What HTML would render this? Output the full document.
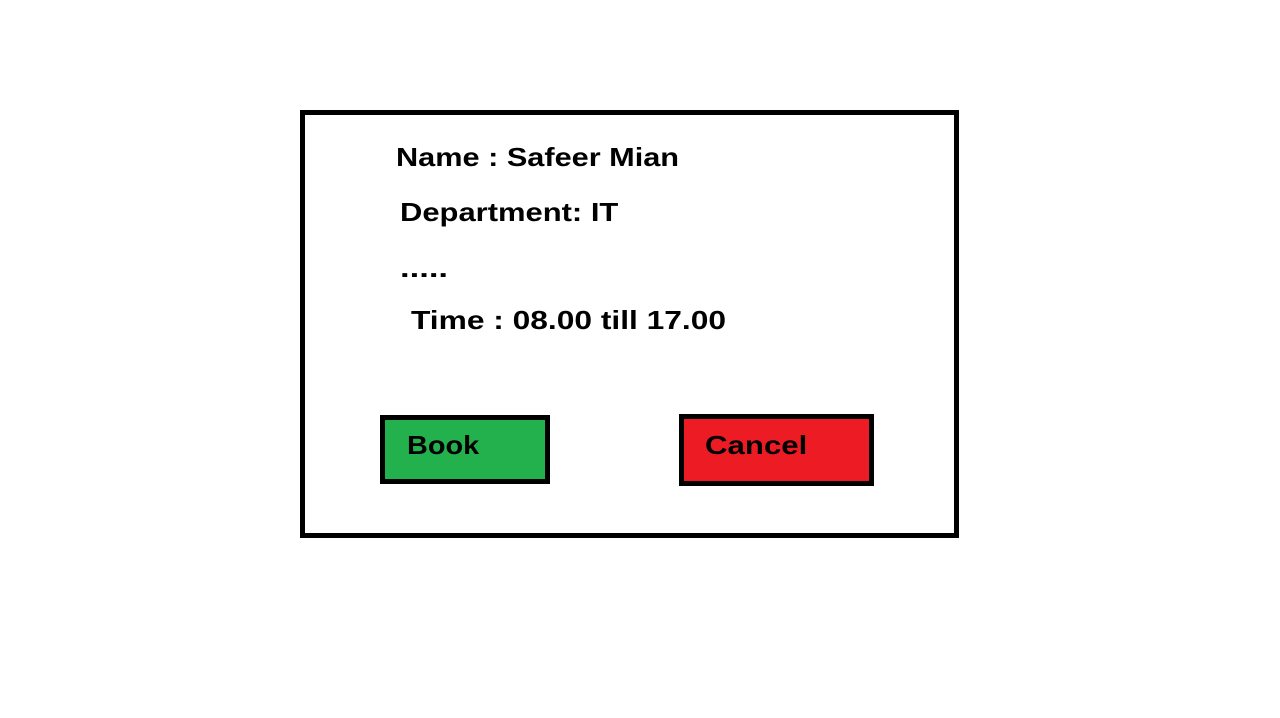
<!DOCTYPE html>
<html><head><style>
body{margin:0;width:1280px;height:718px;background:#fff;position:relative;font-family:"Liberation Sans",Arial,sans-serif;font-weight:bold;overflow:hidden}
.t{position:absolute;font-size:26px;line-height:30px;white-space:nowrap;color:#000;transform-origin:0 50%;transform:scaleX(1.18)}
.box{position:absolute;box-sizing:border-box;border:5px solid #000}
</style></head><body>
<div class="box" style="left:300px;top:110px;width:659px;height:428px"></div>
<div class="t" style="left:396px;top:142px">Name : Safeer Mian</div>
<div class="t" style="left:400px;top:197px;transform:scaleX(1.19)">Department: IT</div>
<div class="t" style="left:400px;top:253px;transform:scaleX(1.33)">.....</div>
<div class="t" style="left:411px;top:305px;transform:scaleX(1.22)">Time : 08.00 till 17.00</div>
<div class="box" style="left:380px;top:415px;width:170px;height:69px;background:#22b14c"></div>
<div class="t" style="left:407px;top:430px;transform:scaleX(1.11)">Book</div>
<div class="box" style="left:679px;top:414px;width:195px;height:72px;background:#ed1c24"></div>
<div class="t" style="left:705px;top:430px;transform:scaleX(1.2)">Cancel</div>
</body></html>
